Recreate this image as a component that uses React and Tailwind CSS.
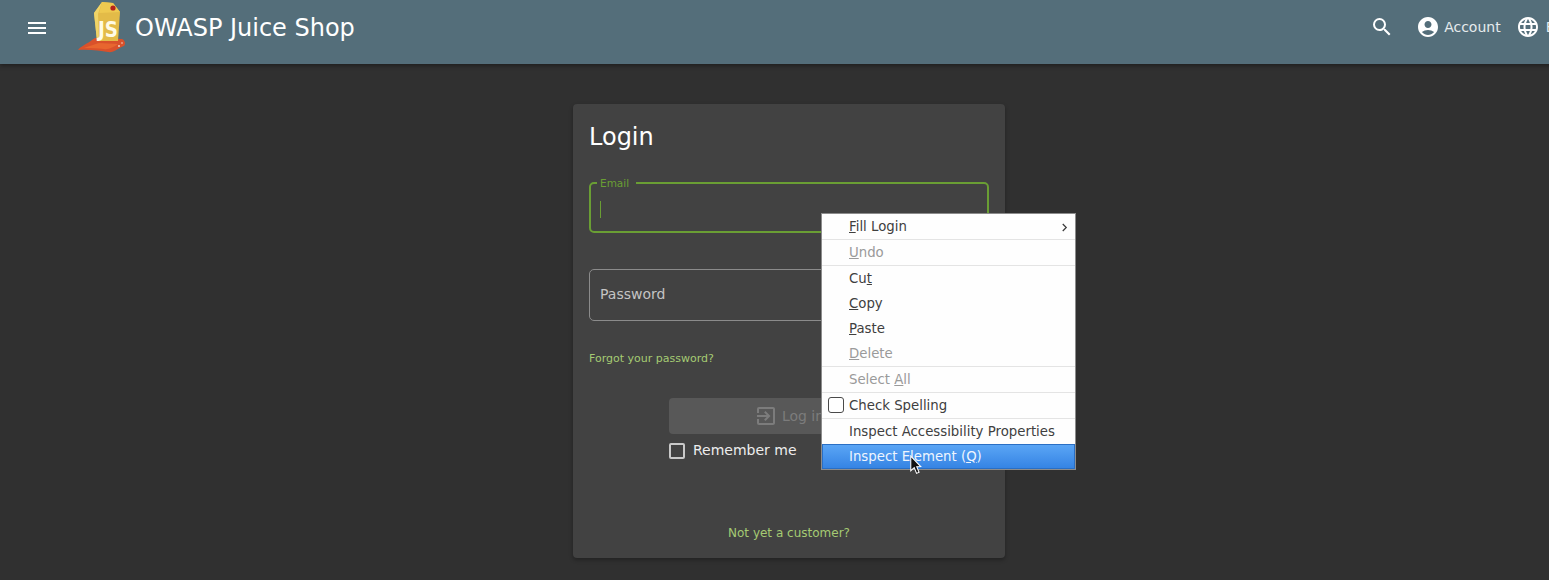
import React from "react";
import { MdMenu, MdSearch, MdAccountCircle, MdLanguage, MdExitToApp } from "react-icons/md";

// Juice carton logo
const Logo = () => (
  <svg viewBox="0 0 48 56" className="w-[48px] h-[56px] shrink-0">
    <path d="M0 50 C3 46 9 44 14 40 L17 38 L44 39 C47 40 48 44 46 46 C40 48 36 53 30 52 C22 51 12 49 0 50 Z" fill="#d9512b" />
    <path d="M6 48 C12 46 17 44 21 43 L40 44 C36 47 30 50 26 49 C20 48 12 48 6 48 Z" fill="#e8662f" />
    <path d="M24 2 L35 3 L42 12 L40 41 L19 41 L16 13 Z" fill="#e3bb48" />
    <path d="M24 2 L16 13 L19 41 L21 41 L20 14 Z" fill="#f0d468" />
    <path d="M24 2 L35 3 L42 12 L21 13 Z" fill="#eec950" />
    <circle cx="35" cy="8" r="2.6" fill="#b5231c" />
    <text x="20" y="37" textLength="20" lengthAdjust="spacingAndGlyphs" fontFamily="'DejaVu Sans', sans-serif" fontWeight="700" fontSize="21" fill="#fffbe6">JS</text>
    <circle cx="41" cy="46" r="1" fill="#f6d9c8" />
    <circle cx="44" cy="43" r="0.8" fill="#f6d9c8" />
  </svg>
);

const MenuItem = ({ children, disabled, leading }) => (
  <div className={`relative h-[25px] pl-[27px] pr-2 flex items-center text-[13.3px] ${disabled ? "text-[#9a9a9a]" : "text-[#3f3f3f]"}`}>
    {leading}
    <span>{children}</span>
  </div>
);

const Sep = () => <div className="h-px bg-[#e4e4e4]" />;

const App = () => {
  return (
    <div className="relative h-[580px] w-[1549px] overflow-hidden bg-[#303030] font-['DejaVu_Sans',sans-serif]">
      {/* the page is wider than the window, the right end of the toolbar gets clipped */}
      <div className="w-[1578px]">
        <header className="relative z-10 h-[64px] bg-[#546e7a] flex items-center text-white shadow-[0_2px_4px_rgba(0,0,0,0.35)]">
          <div className="w-[74px] flex justify-center shrink-0 -mt-[8px]">
            <MdMenu size={24} />
          </div>
          <div className="ml-[4px] -mt-[8px] shrink-0">
            <Logo />
          </div>
          <span className="ml-[9px] text-[24px] -mt-[8px] tracking-[-0.01px]">OWASP Juice Shop</span>
          <div className="ml-auto pr-[13px] flex items-center -mt-[10px] shrink-0">
            <MdSearch size={24} />
            <MdAccountCircle size={24} className="ml-[22px]" />
            <span className="ml-[4px] text-[14px] text-[#e6ebed]">Account</span>
            <MdLanguage size={24} className="ml-[15px]" />
            <span className="ml-[6px] text-[14px] text-[#e6ebed]">EN</span>
          </div>
        </header>

        <main className="flex justify-center pt-[40px]">
          <div className="w-[432px] h-[454px] bg-[#424242] rounded-[4px] p-4 shadow-[0_2px_4px_rgba(0,0,0,0.3)] text-white flex flex-col">
            <h1 className="text-[24px] leading-[34px]">Login</h1>

            <div className="relative mt-[28px] h-[51px] border-2 border-[#6a9e34] rounded-[5px] flex items-center pl-[9px]">
              <span className="absolute -top-[8px] left-[6px] pl-[3px] pr-[7px] bg-[#424242] text-[10.5px] leading-[14px] text-[#6a9e34]">Email</span>
              <span className="w-px h-[17px] bg-[#6a9e34] mt-[4px]" />
            </div>

            <div className="mt-[36px] h-[52px] border border-[#8b8b8b] rounded-[5px] flex items-center pl-[10px] pb-[2px] text-[14px] text-[#c4c4c4]">
              Password
            </div>

            <a className="mt-[31px] text-[11px] leading-[14px] text-[#a5cb73]">Forgot your password?</a>

            <div className="mt-[32px] ml-[80px] w-[240px]">
              <div className="h-[36px] bg-[#585858] rounded-[4px] flex items-center justify-center text-[14px] text-[#7c7c7c]">
                <MdExitToApp size={24} className="mr-[4px]" />
                <span>Log in</span>
              </div>
              <label className="flex items-center mt-[6px] h-[20px]">
                <span className="w-[16px] h-[16px] border-2 border-[#c9c9c9] rounded-[2px] mt-[1px]" />
                <span className="ml-[8px] text-[14px] text-[#ededed]">Remember me</span>
              </label>
            </div>

            <a className="mt-[65px] text-center text-[12px] leading-[16px] text-[#a5cb73]">Not yet a customer?</a>
          </div>
        </main>
      </div>

      {/* browser context menu */}
      <div className="absolute z-20 left-[821px] top-[213px] w-[255px] h-[257px] bg-[#fefefe] border border-[#8c8c8c] flex flex-col">
        <MenuItem>
          <u>F</u>ill Login
          <svg viewBox="0 0 8 10" className="absolute right-[7px] top-[9px] w-[7px] h-[9px]">
            <path d="M2 1 L6 5 L2 9" fill="none" stroke="#3a3a3a" strokeWidth="1.4" />
          </svg>
        </MenuItem>
        <Sep />
        <MenuItem disabled><u>U</u>ndo</MenuItem>
        <Sep />
        <MenuItem>Cu<u>t</u></MenuItem>
        <MenuItem><u>C</u>opy</MenuItem>
        <MenuItem><u>P</u>aste</MenuItem>
        <MenuItem disabled><u>D</u>elete</MenuItem>
        <Sep />
        <MenuItem disabled>Select <u>A</u>ll</MenuItem>
        <Sep />
        <MenuItem leading={<span className="absolute left-[6px] top-[4px] w-[16px] h-[16px] border border-[#4a4a4a] rounded-[3px] bg-white" />}>
          Check Spelling
        </MenuItem>
        <Sep />
        <MenuItem>Inspect Accessibility Properties</MenuItem>
        <div className="h-[25px] pl-[27px] flex items-center text-[13.3px] text-[#eef5fe] bg-gradient-to-b from-[#5aa5f5] to-[#3584e4] border border-[#2a6fc4]">
          <span className="-ml-px">Inspect Element (<u>Q</u>)</span>
        </div>
      </div>

      {/* mouse pointer */}
      <svg viewBox="0 0 12 20" className="absolute z-30 left-[909px] top-[455px] w-[13px] h-[21px]">
        <path d="M1.5 1 L1.5 15 L4.8 12 L7 17.5 L9.4 16.5 L7.2 11.2 L11 11 Z" fill="#111" stroke="#fff" strokeWidth="1" />
      </svg>
    </div>
  );
};

export default App;
